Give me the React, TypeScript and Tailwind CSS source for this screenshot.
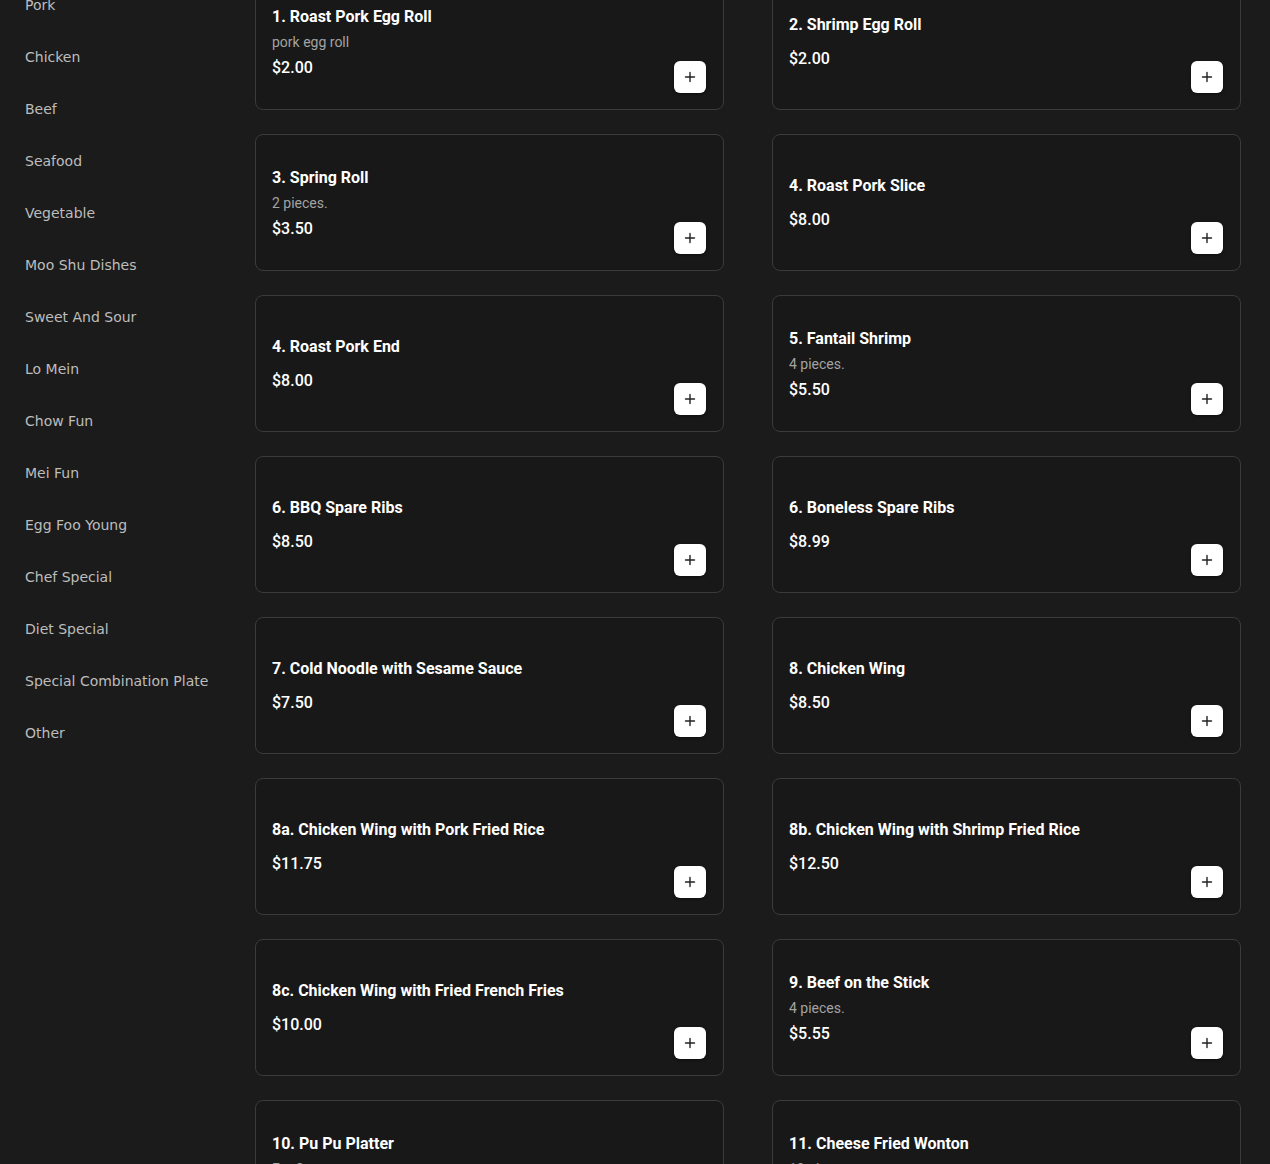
import React from 'react';

type Item = { name: string; desc?: string; price: string };

const categories = [
  'Pork',
  'Chicken',
  'Beef',
  'Seafood',
  'Vegetable',
  'Moo Shu Dishes',
  'Sweet And Sour',
  'Lo Mein',
  'Chow Fun',
  'Mei Fun',
  'Egg Foo Young',
  'Chef Special',
  'Diet Special',
  'Special Combination Plate',
  'Other',
];

const items: Item[] = [
  { name: '1. Roast Pork Egg Roll', desc: 'pork egg roll', price: '$2.00' },
  { name: '2. Shrimp Egg Roll', price: '$2.00' },
  { name: '3. Spring Roll', desc: '2 pieces.', price: '$3.50' },
  { name: '4. Roast Pork Slice', price: '$8.00' },
  { name: '4. Roast Pork End', price: '$8.00' },
  { name: '5. Fantail Shrimp', desc: '4 pieces.', price: '$5.50' },
  { name: '6. BBQ Spare Ribs', price: '$8.50' },
  { name: '6. Boneless Spare Ribs', price: '$8.99' },
  { name: '7. Cold Noodle with Sesame Sauce', price: '$7.50' },
  { name: '8. Chicken Wing', price: '$8.50' },
  { name: '8a. Chicken Wing with Pork Fried Rice', price: '$11.75' },
  { name: '8b. Chicken Wing with Shrimp Fried Rice', price: '$12.50' },
  { name: '8c. Chicken Wing with Fried French Fries', price: '$10.00' },
  { name: '9. Beef on the Stick', desc: '4 pieces.', price: '$5.55' },
  { name: '10. Pu Pu Platter', desc: 'For 2 persons.', price: '$16.95' },
  { name: '11. Cheese Fried Wonton', desc: '10 pieces.', price: '$6.50' },
];

const PlusIcon = () => (
  <svg width="12" height="12" viewBox="0 0 12 12" fill="none">
    <path d="M6 1.5v9M1.5 6h9" stroke="#222" strokeWidth="1.4" strokeLinecap="round" />
  </svg>
);

const MenuCard: React.FC<{ item: Item }> = ({ item }) => (
  <div className="h-[137px] rounded-lg border border-[#3b3b3b] bg-[#181818] pl-4 pr-[17px] py-4 flex">
    <div className={item.desc ? 'flex-1 flex flex-col justify-center pt-[2px]' : 'flex-1 flex flex-col justify-center'}>
      <h3 className="text-[16px] leading-6 font-bold text-white">{item.name}</h3>
      {item.desc ? (
        <>
          <p className="mt-[3px] text-[14px] leading-5 text-[#a3a3a3]">{item.desc}</p>
          <p className="mt-[4px] text-[16px] leading-6 font-medium text-white">{item.price}</p>
        </>
      ) : (
        <p className="mt-[10px] text-[16px] leading-6 font-medium text-white">{item.price}</p>
      )}
    </div>
    <button className="self-end w-8 h-8 rounded-md bg-white flex items-center justify-center shadow-[0_1px_3px_rgba(0,0,0,0.5)]">
      <PlusIcon />
    </button>
  </div>
);

export default function App() {
  return (
    <div className="h-[1164px] overflow-hidden bg-[#1b1b1b] flex">
      <aside className="w-[255px] shrink-0 pl-[25px]" style={{ fontFamily: '"DejaVu Sans", sans-serif' }}>
        <ul className="-mt-[21px]">
          {categories.map((c) => (
            <li key={c} className="py-4 text-[14px] leading-5 text-[#bdbdbd]">
              {c}
            </li>
          ))}
        </ul>
      </aside>
      <main className="flex-1 pr-[29px]" style={{ fontFamily: 'Roboto, "Liberation Sans", sans-serif' }}>
        <div className="-mt-[27px] grid grid-cols-2 gap-x-[48px] gap-y-6">
          {items.map((it, i) => (
            <MenuCard key={i} item={it} />
          ))}
        </div>
      </main>
    </div>
  );
}
